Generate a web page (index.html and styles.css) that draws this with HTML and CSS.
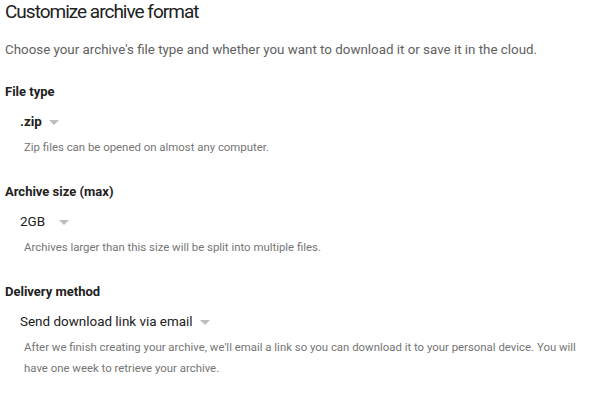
FILE: index.html
```html
<!DOCTYPE html>
<html>
<head>
<meta charset="utf-8">
<link rel="stylesheet" href="styles.css">
</head>
<body>
<div class="page">
  <h1 class="title">Customize archive format</h1>
  <p class="intro">Choose your archive's file type and whether you want to download it or save it in the cloud.</p>

  <section class="field">
    <h2 class="label">File type</h2>
    <div class="select select-bold"><span class="value">.zip</span><span class="caret"></span></div>
    <p class="help">Zip files can be opened on almost any computer.</p>
  </section>

  <section class="field">
    <h2 class="label">Archive size (max)</h2>
    <div class="select"><span class="value">2GB</span><span class="caret caret-wide"></span></div>
    <p class="help">Archives larger than this size will be split into multiple files.</p>
  </section>

  <section class="field">
    <h2 class="label">Delivery method</h2>
    <div class="select"><span class="value">Send download link via email</span><span class="caret"></span></div>
    <p class="help">After we finish creating your archive, we'll email a link so you can download it to your personal device. You will have one week to retrieve your archive.</p>
  </section>
</div>
</body>
</html>
```
FILE: styles.css
```css
html, body {
  margin: 0;
  padding: 0;
  background: #ffffff;
}
body {
  font-family: Roboto, "Liberation Sans", Arial, sans-serif;
  color: #212121;
}
.page {
  padding: 0 10px 0 5px;
}
.title {
  margin: 0;
  font-size: 19px;
  font-weight: 400;
  letter-spacing: -1px;
  line-height: 24px;
  color: #212121;
}
.intro {
  margin: 16px 0 0;
  font-size: 13.35px;
  line-height: 20px;
  color: #616161;
}
.field {
  margin-top: 22px;
}
.field + .field {
  margin-top: 24px;
}
.label {
  margin: 0;
  font-size: 13px;
  font-weight: 700;
  line-height: 20px;
  color: #212121;
}
.select {
  display: flex;
  align-items: center;
  margin: 10px 0 0 15px;
  font-size: 13.45px;
  line-height: 20px;
  color: #212121;
}
.select-bold .value {
  font-weight: 700;
}
.caret {
  width: 0;
  height: 0;
  margin-left: 7px;
  border-left: 5px solid transparent;
  border-right: 5px solid transparent;
  border-top: 5px solid #bdbdbd;
}
.caret-wide {
  margin-left: 14px;
}
.help {
  margin: 5px 0 0 19px;
  font-size: 11.4px;
  line-height: 21px;
  color: #757575;
}
```
